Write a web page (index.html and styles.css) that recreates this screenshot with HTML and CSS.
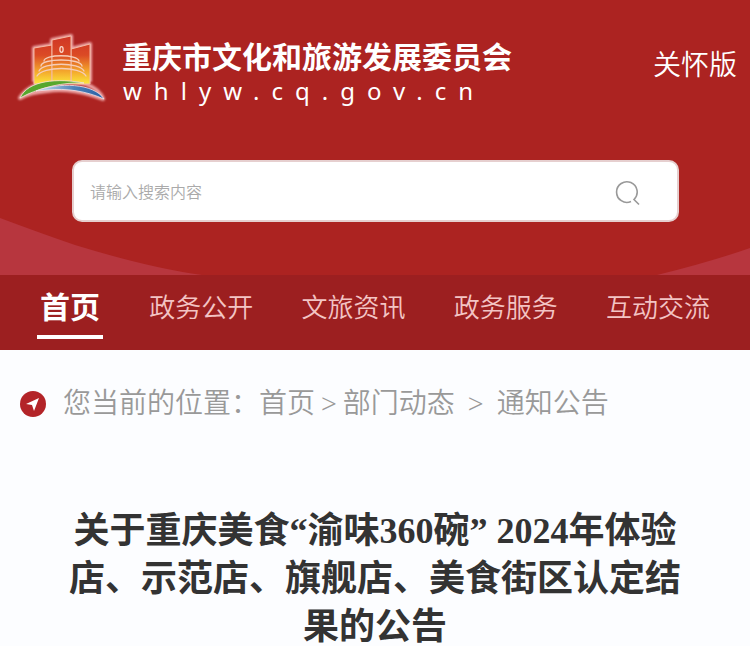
FILE: index.html
```html
<!DOCTYPE html>
<html lang="zh-CN">
<head>
    <meta charset="UTF-8">
    <meta name="viewport" content="width=device-width, initial-scale=1.0">
    <title>重庆市文化和旅游发展委员会</title>
    <link rel="stylesheet" href="styles.css">
</head>
<body>

    <header class="header">
        <svg class="header-bg" viewBox="0 0 750 57" preserveAspectRatio="none" aria-hidden="true">
            <path d="M0 0 Q40 15 75 27 Q150 50 202 57 H0 Z" fill="#b7363e"/>
            <path d="M750 30 Q710 44 657 57 H750 Z" fill="#b7363e"/>
        </svg>

        <div class="top">
            <a class="brand" href="#">
                <svg class="logo" viewBox="0 0 104 80" aria-hidden="true">
                    <defs>
                        <linearGradient id="tower" x1="0" y1="8" x2="0" y2="56" gradientUnits="userSpaceOnUse">
                            <stop offset="0" stop-color="#cf3526"/>
                            <stop offset="0.4" stop-color="#db4a25"/>
                            <stop offset="0.72" stop-color="#f3a32b"/>
                            <stop offset="1" stop-color="#fbe83c"/>
                        </linearGradient>
                        <linearGradient id="river" x1="36" y1="0" x2="92" y2="0" gradientUnits="userSpaceOnUse">
                            <stop offset="0" stop-color="#a9cbe4"/>
                            <stop offset="0.5" stop-color="#4f82b8"/>
                            <stop offset="1" stop-color="#2860a6"/>
                        </linearGradient>
                        <filter id="glow" x="-10%" y="-10%" width="120%" height="120%">
                            <feGaussianBlur stdDeviation="1"/>
                        </filter>
                    </defs>
                    <g fill="none" stroke="#eea5a5" stroke-width="4" stroke-linejoin="round" filter="url(#glow)">
                        <path d="M24 54 V20 L42 17 V12 L61 8 V21 L80 16 V54"/>
                        <path d="M10 70 C20 54 50 48 76 56 C86 60 91 65 93 71 C76 64 54 60 37 63 C24 64 17 66 10 70 Z"/>
                    </g>
                    <g fill="url(#tower)" stroke="#f5b9a4" stroke-width="1">
                        <path d="M24 56 V20 L42 17 V56 Z"/>
                        <path d="M61 56 V21 L80 16 V56 Z"/>
                        <path d="M42 56 V12 L61 8 V56 Z"/>
                    </g>
                    <ellipse cx="51.500" cy="21.500" rx="1.600" ry="2.800" fill="none" stroke="#fbd9cc" stroke-width="1.300"/>
                    <g fill="none" stroke="#f6cdb9" stroke-width="1.300" stroke-linecap="round">
                        <path d="M34 33 C34 26 68 26 69 33"/>
                        <path d="M31 38 C31 30 71 30 72 38"/>
                        <path d="M29 43 C33 34 69 34 74 43"/>
                        <path d="M27 48 C33 38 70 38 76 48"/>
                    </g>
                    <path d="M10 70 C18 52 48 50 74 55 C52 54 32 60 18 66 Z" fill="#56a72d" stroke="#f7e5dc" stroke-width="0.800"/>
                    <path d="M26 63 C48 54 84 55 94 71 C76 63 56 60 38 62 Z" fill="url(#river)" stroke="#f7e5e8" stroke-width="0.800"/>
                </svg>
                <span class="brand-text">
                    <span class="brand-name">重庆市文化和旅游发展委员会</span>
                    <span class="brand-url">whlyw.cq.gov.cn</span>
                </span>
            </a>
            <a class="care-link" href="#">关怀版</a>
        </div>

        <form class="search">
            <input class="search-input" type="text" placeholder="请输入搜索内容" aria-label="请输入搜索内容">
            <button class="search-btn" type="button" aria-label="搜索">
                <svg viewBox="0 0 26 26" fill="none" stroke="#999" stroke-width="1.6" aria-hidden="true">
                    <path d="M16 21.500 A10.300 10.300 0 1 1 19 19.500 L24 24.500"/>
                </svg>
            </button>
        </form>
    </header>

    <nav class="nav">
        <a class="nav-item active" href="#">首页</a>
        <a class="nav-item" href="#">政务公开</a>
        <a class="nav-item" href="#">文旅资讯</a>
        <a class="nav-item" href="#">政务服务</a>
        <a class="nav-item" href="#">互动交流</a>
    </nav>

    <main class="content">
        <div class="breadcrumb">
            <svg class="breadcrumb-icon" viewBox="0 0 26 26" aria-hidden="true">
                <circle cx="13" cy="13" r="13" fill="#b32428"/>
                <path d="M19 7 L6 13 L12 14 L14 20 Z" fill="#fff"/>
            </svg>
            <span>您当前的位置：</span>
            <a href="#">首页</a>
            <span class="sep">&gt;</span>
            <a href="#">部门动态</a>
            <span class="sep sep-wide">&gt;</span>
            <a href="#">通知公告</a>
        </div>

        <h1 class="title">关于重庆美食“渝味360碗” 2024年体验店、示范店、旗舰店、美食街区认定结果的公告</h1>
    </main>

</body>
</html>
```

FILE: styles.css
```css
* {
    box-sizing: border-box;
}

body {
    margin: 0;
    font-family: "Liberation Serif", "Noto Sans CJK SC", serif;
    background-color: #fcfdff;
    color: #333;
}

a {
    color: inherit;
    text-decoration: none;
}

.header {
    position: relative;
    padding: 28px 13px 53px 10px;
    background-color: #ac2321;
    color: #fff;
    font-family: "Noto Sans CJK SC", sans-serif;
}

/* Light hills behind the search box */
.header-bg {
    position: absolute;
    left: 0;
    bottom: 0;
    width: 100%;
    height: 57px;
}

.top {
    display: flex;
    justify-content: space-between;
}

.brand {
    display: flex;
    gap: 8px;
}

.logo {
    width: 104px;
    height: 80px;
}

.brand-text {
    display: flex;
    flex-direction: column;
    padding-top: 5px;
}

.brand-name {
    font-size: 30px;
    line-height: 44px;
    font-weight: 700;
}

.brand-url {
    padding-left: 1px;
    font-family: "Noto Sans", sans-serif;
    font-size: 24px;
    line-height: 28px;
    letter-spacing: 12px;
}

.care-link {
    padding-top: 15px;
    font-size: 28px;
    line-height: 40px;
    font-weight: 350;
}

.search {
    position: relative;
    display: flex;
    align-items: center;
    margin: 52px 58px 0 62px;
    height: 62px;
    border: 2px solid #e6cfcf;
    border-radius: 10px;
    background-color: #fff;
}

.search-input {
    flex: 1;
    min-width: 0;
    height: 100%;
    padding: 0 16px;
    border: 0;
    border-radius: 10px;
    outline: none;
    background: none;
    font-family: "Noto Sans CJK SC", sans-serif;
    font-size: 16px;
    font-weight: 350;
}

.search-input::placeholder {
    color: #aaa;
}

.search-btn {
    display: flex;
    margin: 4px 36px 0 0;
    padding: 0;
    border: 0;
    background: none;
}

.search-btn svg {
    width: 26px;
    height: 26px;
}

.nav {
    display: flex;
    justify-content: space-between;
    padding: 0 40px 11px 37px;
    background-color: #9c1f20;
    font-family: "Noto Sans CJK SC", sans-serif;
}

.nav-item {
    height: 64px;
    color: #f3c4c4;
    font-size: 26px;
    line-height: 62px;
    font-weight: 350;
}

.nav-item.active {
    margin-right: -2px;
    padding: 0 3px;
    border-bottom: 4px solid #fff;
    color: #fff;
    font-size: 30px;
    line-height: 60px;
    font-weight: 700;
}

.breadcrumb {
    display: flex;
    align-items: center;
    padding: 34px 20px 30px;
    color: #999;
    font-size: 28px;
    line-height: 40px;
    font-weight: 350;
}

.breadcrumb-icon {
    width: 26px;
    height: 26px;
    margin-right: 17px;
}

.sep {
    margin: 0 6px;
}

.sep-wide {
    margin: 0 13px;
}

.title {
    margin: 53px 0 0;
    padding: 0 60px;
    font-size: 36px;
    line-height: 48px;
    font-weight: 700;
    text-align: center;
}
```
